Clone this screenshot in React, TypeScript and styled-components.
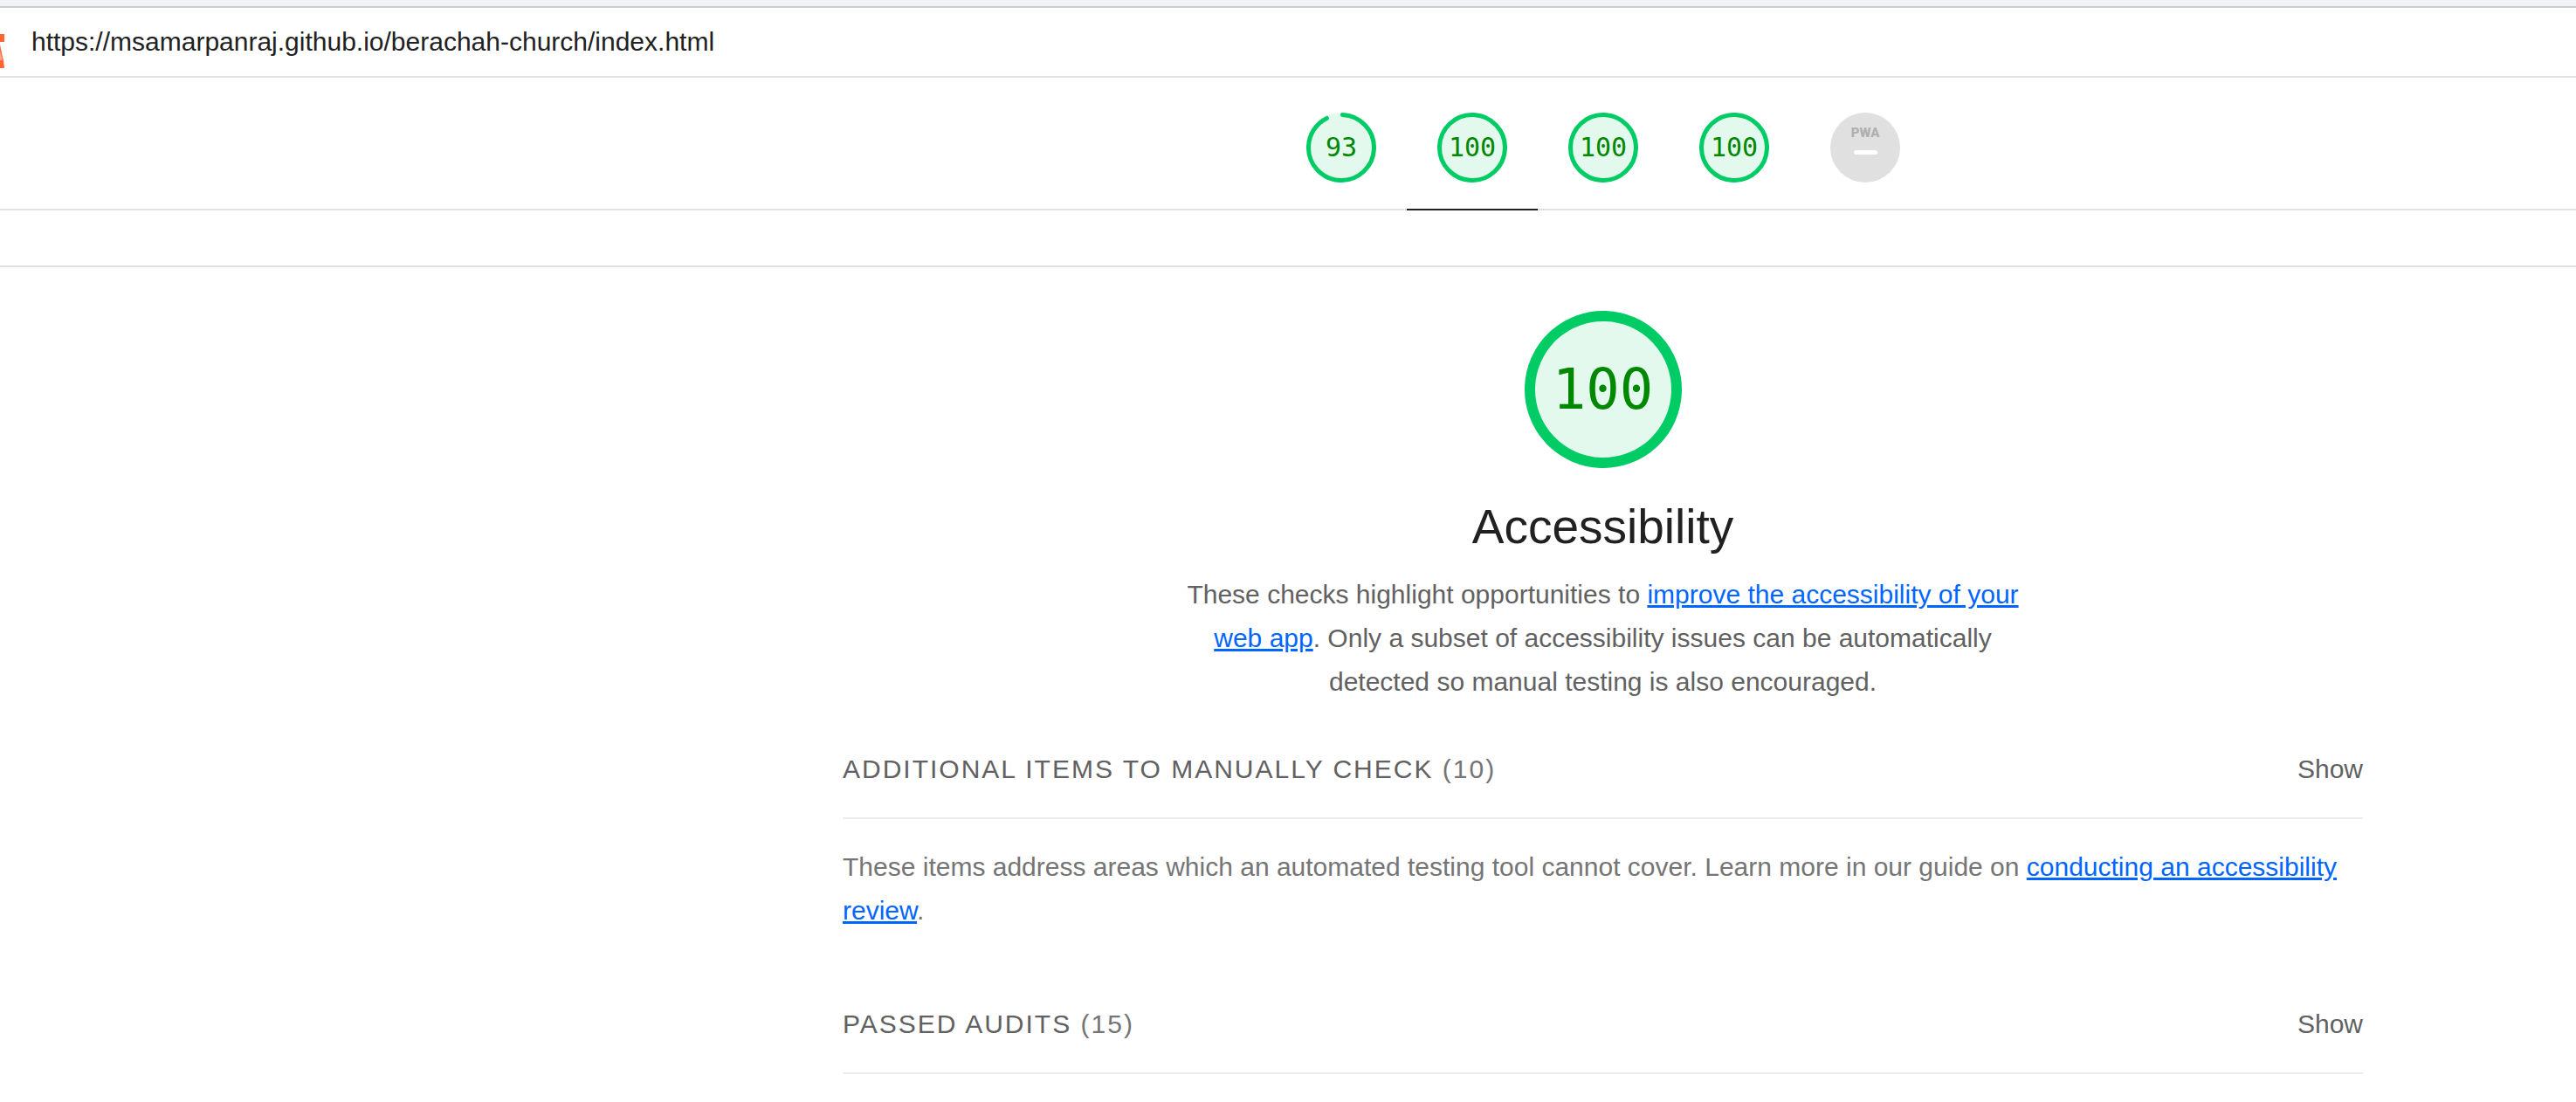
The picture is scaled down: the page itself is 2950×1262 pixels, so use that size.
import React, { useState } from 'react';
import styled, { createGlobalStyle } from 'styled-components';

const GlobalStyle = createGlobalStyle`
  *, *::before, *::after { box-sizing: border-box; }
  body {
    margin: 0;
    background: #fff;
    color: #212121;
    font-family: "Liberation Sans", Arial, sans-serif;
    font-size: 30px;
    line-height: 50px;
  }
  h1, h2, p { margin: 0; font-weight: 400; }
`;

const BrowserEdge = styled.div`
  height: 9px;
  background: #f1f3f4;
  border-bottom: 2px solid #c9ccd1;
`;

const Topbar = styled.header`
  display: flex;
  align-items: center;
  gap: 31px;
  height: 80px;
  border-bottom: 2px solid #e0e0e0;
`;

const Favicon = styled.svg`
  display: block;
  flex: none;
  align-self: flex-end;
  margin-bottom: 9px;
`;

const ReportUrl = styled.a`
  color: #212121;
  text-decoration: none;
`;

const ScoresNav = styled.nav`
  display: flex;
  justify-content: center;
  height: 152px;
  padding-left: 722px;
  border-bottom: 2px solid #e0e0e0;
`;

const ScoreTab = styled.a<{ $active?: boolean }>`
  display: flex;
  justify-content: center;
  width: 150px;
  height: 152px;
  padding-top: 40px;
  border-bottom: 2px solid ${(p) => (p.$active ? '#212121' : 'transparent')};
  text-decoration: none;
`;

const StickySpacer = styled.div`
  height: 65px;
  border-bottom: 2px solid #e0e0e0;
`;

const GaugeBox = styled.span<{ $size: number }>`
  display: grid;
  place-items: center;
  width: ${(p) => p.$size}px;
  height: ${(p) => p.$size}px;

  > * { grid-area: 1 / 1; }
`;

const GaugeValue = styled.span<{ $large?: boolean }>`
  color: #080;
  font-family: "DejaVu Sans Mono", monospace;
  font-size: ${(p) => (p.$large ? 64 : 30)}px;
`;

const PwaBadge = styled.span`
  display: flex;
  flex-direction: column;
  align-items: center;
  gap: 12px;
  width: 80px;
  height: 80px;
  padding-top: 15px;
  border-radius: 50%;
  background: #e0e0e0;
  color: #b0b0b0;
  font: 900 15px/16px Roboto, sans-serif;

  &::after {
    content: "";
    width: 27px;
    height: 5px;
    border-radius: 3px;
    background: #fff;
  }
`;

const Report = styled.main`
  padding: 50px 244px 0 965px;
`;

const CategoryHeader = styled.section`
  display: flex;
  flex-direction: column;
  align-items: center;
  text-align: center;
`;

const CategoryTitle = styled.h1`
  margin: 37px 0 23px;
  font-size: 55px;
  line-height: 60px;
`;

const CategoryText = styled.p`
  max-width: 1000px;
  color: #616161;
`;

const DocLink = styled.a`
  color: #06f;
`;

const Clump = styled.section<{ $first?: boolean }>`
  margin-top: ${(p) => (p.$first ? 50 : 80)}px;
`;

const ClumpHeader = styled.div`
  display: flex;
  justify-content: space-between;
  padding-bottom: 30px;
  border-bottom: 2px solid #ebebeb;
  color: #616161;
`;

const ClumpTitle = styled.h2`
  font-size: 30px;
  letter-spacing: 2px;
  text-transform: uppercase;
`;

const ClumpCount = styled.span`
  color: #757575;
`;

const ToggleButton = styled.button`
  padding: 0;
  border: 0;
  background: none;
  color: inherit;
  font: inherit;
  cursor: pointer;
`;

const ClumpText = styled.p`
  margin-top: 30px;
  color: #757575;
`;

function Gauge({ score, size, stroke, large }: { score: number; size: number; stroke: number; large?: boolean }) {
  const r = (size - stroke) / 2;
  const c = size / 2;
  const length = 2 * Math.PI * r;
  // A partial ring stops half a stroke early so its round cap ends on the score.
  const arc = score === 100 ? length : (score / 100) * length - stroke / 2;
  return (
    <GaugeBox $size={size}>
      <svg width={size} height={size} aria-hidden="true">
        <circle cx={c} cy={c} r={c} fill="#e4f9ee" />
        <circle
          cx={c}
          cy={c}
          r={r}
          fill="none"
          stroke="#0c6"
          strokeWidth={stroke}
          strokeLinecap="round"
          strokeDasharray={`${arc} ${length}`}
          transform={`rotate(-87.9 ${c} ${c})`}
        />
      </svg>
      <GaugeValue $large={large}>{score}</GaugeValue>
    </GaugeBox>
  );
}

const categories = [
  { id: 'performance', label: 'Performance', score: 93 },
  { id: 'accessibility', label: 'Accessibility', score: 100 },
  { id: 'best-practices', label: 'Best Practices', score: 100 },
  { id: 'seo', label: 'SEO', score: 100 },
];

function AuditClump({ title, count, first, children }: { title: string; count: number; first?: boolean; children?: React.ReactNode }) {
  const [open, setOpen] = useState(false);
  return (
    <Clump $first={first}>
      <ClumpHeader>
        <ClumpTitle>
          {title} <ClumpCount>({count})</ClumpCount>
        </ClumpTitle>
        <ToggleButton type="button" aria-expanded={open} onClick={() => setOpen(!open)}>
          {open ? 'Hide' : 'Show'}
        </ToggleButton>
      </ClumpHeader>
      {children}
    </Clump>
  );
}

export default function App() {
  return (
    <>
      <GlobalStyle />
      <BrowserEdge />
      <Topbar>
        <Favicon width="5" height="39" viewBox="0 0 5 39" aria-hidden="true">
          <path d="M0 0h5v9H0z" fill="#f63" />
          <path d="M0 16l4 14H0z" fill="#ffa385" />
          <path d="M0 12L3 27l1 3h-1L0 19z" fill="#f63" />
          <path d="M0 30h4l1 9H0z" fill="#f63" />
        </Favicon>
        <ReportUrl href="#report">https://msamarpanraj.github.io/berachah-church/index.html</ReportUrl>
      </Topbar>
      <ScoresNav aria-label="Category scores">
        {categories.map((cat) => (
          <ScoreTab key={cat.id} href={`#${cat.id}`} aria-label={cat.label} $active={cat.id === 'accessibility'}>
            <Gauge score={cat.score} size={80} stroke={5} />
          </ScoreTab>
        ))}
        <ScoreTab href="#pwa">
          <PwaBadge>PWA</PwaBadge>
        </ScoreTab>
      </ScoresNav>
      <StickySpacer />
      <Report id="report">
        <CategoryHeader id="accessibility">
          <Gauge score={100} size={180} stroke={12} large />
          <CategoryTitle>Accessibility</CategoryTitle>
          <CategoryText>
            These checks highlight opportunities to <DocLink href="#improve">improve the accessibility of your web app</DocLink>. Only a
            subset of accessibility issues can be automatically detected so manual testing is also encouraged.
          </CategoryText>
        </CategoryHeader>
        <AuditClump title="Additional items to manually check" count={10} first>
          <ClumpText>
            These items address areas which an automated testing tool cannot cover. Learn more in our guide on{' '}
            <DocLink href="#review">conducting an accessibility review</DocLink>.
          </ClumpText>
        </AuditClump>
        <AuditClump title="Passed audits" count={15} />
      </Report>
    </>
  );
}
